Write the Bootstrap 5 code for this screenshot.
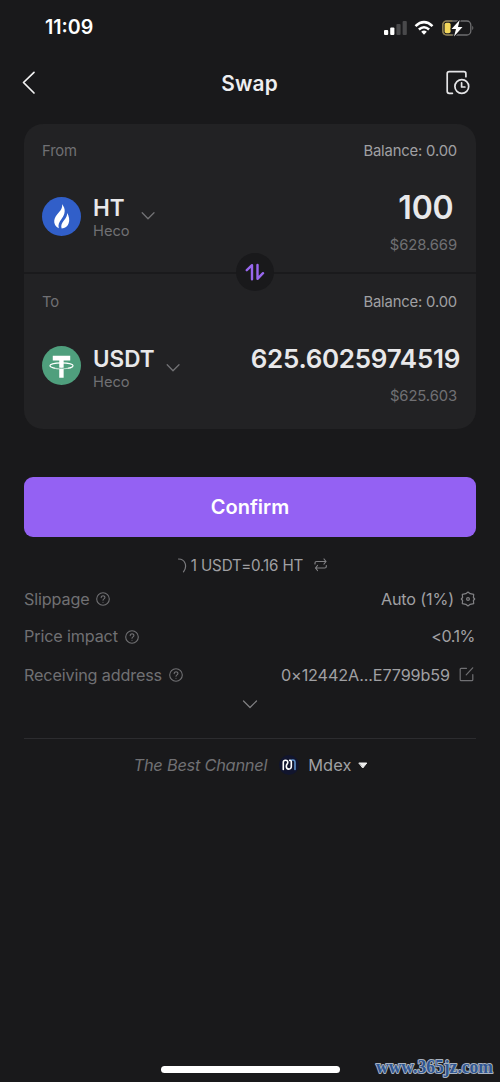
<!DOCTYPE html>
<html lang="en" data-bs-theme="dark">
<head>
<meta charset="utf-8">
<meta name="viewport" content="width=device-width, initial-scale=1">
<title>Swap</title>
<link href="https://cdn.jsdelivr.net/npm/bootstrap@5.3.0/dist/css/bootstrap.min.css" rel="stylesheet">
<style>
body{background:#19191b;color:#e8e8ea;font-family:Inter,sans-serif;line-height:1;overflow:hidden}
svg{display:block;flex:none;fill:none;stroke-linecap:round;stroke-linejoin:round}
.screen{width:500px;height:1082px}
.status{height:55px;padding:0 26px 0 45px}
.clock{font-size:19.6px;font-weight:600;color:#fff;padding-top:1px}
.wifi{margin:0 8px 0 6px}
.topbar{height:57px;padding:0 30px 0 22px}
.topbar>svg{position:relative;top:-1px}
.topbar h1{font-size:20.8px;font-weight:600;letter-spacing:.2px;padding-left:7px;padding-top:1px;color:#eeeef0}
.swap-card{margin:12px 24px 0;height:304.5px;border-radius:19px;background:#222224;overflow:hidden;border:0}
.side{padding:0 19px 0 18px}
.side-from{height:147.5px;border-bottom:2px solid #1a1a1c;box-sizing:content-box}
.caption-row{height:54px;font-size:14.8px;letter-spacing:-.16px}
.dim{color:#707073}
.soft{color:#a0a0a3}
.token-row{height:76px}
.token-names{padding-top:3px;margin-left:13px}
.side-to .token-names{padding-top:6px}
.chevron{margin-left:7px}
.symbol{font-size:22.5px;font-weight:600;line-height:26px}
.chain{font-size:14.7px;line-height:20px}
.amount{font-weight:600;line-height:40px;white-space:nowrap}
.amount-in{font-size:32px;margin-right:3.5px;padding-top:2px;letter-spacing:-.2px}
.amount-out{font-size:26px;margin-right:-3px;padding-top:3px;letter-spacing:-.29px}
.fiat{font-size:14.8px;line-height:18px;letter-spacing:-.1px;padding-top:8px}
.flip{width:38px;height:38px;background:#19191b;top:253px;left:235.5px}
.btn-confirm{margin:48.5px 24px 0;height:60px;border-radius:9px;background:#9461f3;color:#fff;font-size:20px;font-weight:600;border:0;padding:0}
.rate{height:26px;margin-top:16px;font-size:15.2px;letter-spacing:-.15px;padding-left:4px}
.rate-text{margin:0 11px 0 4px}
.detail{margin:0 24px;font-size:16.2px;letter-spacing:-.15px}
.slippage{height:40px}
.impact{height:35px}
.impact .soft{letter-spacing:-.5px;padding-right:1px}
.receiving{height:42px}
.help{margin-left:7px}
.more{height:42px;padding-top:2px}
.divider{margin:0 24px;height:1px;background:#2c2c2f}
.channel{height:52px;font-size:16.4px;letter-spacing:-.25px;padding-left:2px}
.channel-name{letter-spacing:.05px}
.home-bar{width:179px;height:7px;border-radius:4px;background:#fff;left:160.5px;bottom:9.5px}
</style>
</head>
<body>
<main class="screen position-relative d-flex flex-column">
  <div class="status d-flex align-items-center justify-content-between">
    <span class="clock">11:09</span>
    <div class="d-flex align-items-center">
      <svg width="24" height="16" viewBox="0 0 24 16"><g fill="#fff"><rect x="0" y="10" width="4.200" height="5" rx="1"/><rect x="6.200" y="7.500" width="4.200" height="7.500" rx="1"/></g><g fill="#49494b"><rect x="12.400" y="4" width="4.200" height="11" rx="1"/><rect x="18.600" y="1" width="4.200" height="14" rx="1"/></g></svg>
      <svg class="wifi" width="20" height="16" viewBox="0 0 20 16" stroke="#fff" stroke-width="2.600"><path d="M1.500 6.100Q10 -1.700 18.500 6.100M4.900 9.500Q10 5 15.100 9.500" stroke-linecap="butt"/><path d="M7.200 11.700Q10 9.500 12.800 11.700L10 14.700Z" fill="#fff" stroke="none"/></svg>
      <svg width="32" height="18" viewBox="0 0 32 18"><rect x=".8" y="2" width="28" height="14" rx="4" stroke="#6e6e70" stroke-width="1.300"/><path d="M10 2H5Q.8 2 .8 6v6q0 4 4.200 4h5" stroke="#95834a" stroke-width="1.200"/><rect x="2.600" y="3.800" width="6" height="10.400" rx="1.800" fill="#f3d75b"/><path d="M30.300 6.800q2 2.200 0 4.400z" fill="#777"/><path d="M17.700 1 9.500 10H14l-2 7.500L20.500 8H16z" fill="#fff" stroke="#19191b" stroke-width="2" paint-order="stroke"/></svg>
    </div>
  </div>
  <header class="topbar d-flex align-items-center justify-content-between">
    <svg width="26" height="24" viewBox="0 0 26 24" stroke="#f2f2f3" stroke-width="1.700"><path d="M12 1.300 1.500 11.500 12 22"/></svg>
    <h1 class="mb-0">Swap</h1>
    <svg width="26" height="26" viewBox="0 0 26 26" stroke="#e5e5e7" stroke-width="1.700"><path d="M8.400 23.300H5.200q-2 0-2-2V3.700q0-2 2-2h14.700q2 0 2 2v3"/><circle cx="17.800" cy="16.500" r="6.900"/><path d="M17.600 12.800v4.200h3.300"/></svg>
  </header>

  <section class="swap-card card position-relative">
    <div class="side side-from">
      <div class="caption-row d-flex align-items-center justify-content-between"><span class="dim">From</span><span class="soft">Balance: 0.00</span></div>
      <div class="token-row d-flex justify-content-between">
        <div class="d-flex align-items-center">
          <svg width="39" height="39" viewBox="0 0 38 38"><circle cx="19" cy="19" r="19" fill="#315fc9"/><path d="M19.400 6.800c1 4-1.400 6.400-4.300 9.700-5.200 5.900-3.500 11.700 1.300 13.900-1-3.300.2-5.700 2.800-9.200 3.300-4.500 4.400-9.300.2-14.400z" fill="#fff"/><path d="M24.600 15.600c1.700 3 2.700 7 1.300 10.200-1 2.700-3.300 4.700-6.800 5-1-3.200.3-5.700 2.400-8.200 2-2.400 3-4.200 3.100-7z" fill="#fff"/></svg>
          <div class="token-names" style="margin-left:12px"><div class="symbol">HT</div><div class="chain dim">Heco</div></div>
          <svg class="chevron" width="22" height="12" viewBox="0 0 22 12" stroke="#727275" stroke-width="1.300"><path d="M5.200 2.800 11 8.800 17 2.800"/></svg>
        </div>
        <div class="text-end pt-2"><div class="amount amount-in">100</div><div class="fiat dim">$628.669</div></div>
      </div>
    </div>
    <div class="side side-to">
      <div class="caption-row d-flex align-items-center justify-content-between pt-1"><span class="dim">To</span><span class="soft">Balance: 0.00</span></div>
      <div class="token-row d-flex justify-content-between">
        <div class="d-flex align-items-center">
          <svg width="39" height="39" viewBox="0 0 38 38"><circle cx="19" cy="19" r="19" fill="#4f9f7d"/><ellipse cx="19" cy="19.300" rx="11.300" ry="2.900" stroke="#fff" stroke-width="1.100"/><path d="M10.500 9.500h17v4.700h-6.400V31h-4.300V14.200h-6.300z" fill="#fff"/><path d="M13 21.300q6 .9 12 0" stroke="#4f9f7d" stroke-width=".8"/></svg>
          <div class="token-names" style="margin-left:12px"><div class="symbol">USDT</div><div class="chain dim">Heco</div></div>
          <svg class="chevron mt-1" width="22" height="12" viewBox="0 0 22 12" stroke="#727275" stroke-width="1.300"><path d="M5.200 2.800 11 8.800 17 2.800"/></svg>
        </div>
        <div class="text-end pt-2"><div class="amount amount-out">625.6025974519</div><div class="fiat dim">$625.603</div></div>
      </div>
    </div>
  </section>
  <div class="flip position-absolute rounded-circle d-flex align-items-center justify-content-center">
    <svg width="20" height="18" viewBox="0 0 20 18" stroke="#9867ee" stroke-width="2.400"><path d="M1.800 7.200 7 2.200v14M12.500 2v13.800L18 10.200"/></svg>
  </div>

  <button class="btn btn-confirm" type="button">Confirm</button>
  <div class="rate soft d-flex align-items-center justify-content-center">
    <svg width="10" height="16" viewBox="0 0 10 16" stroke="#7b7b7e" stroke-width="1.200"><path d="M1.500 1C8.500 1 10.500 8.500 6.500 13.800"/></svg>
    <span class="rate-text">1 USDT=0.16 HT</span>
    <svg width="13" height="16" viewBox="2 1 13 16" stroke="#818184" stroke-width="1.200"><path d="M3 7V6q0-1.500 1.500-1.500H14M12 2l2 2.500L12 7M14.300 8.500v1q0 1.500-1.500 1.500H3.500M5.500 8.500l-2 2.500 2 2.500"/></svg>
  </div>
  <div class="detail slippage d-flex align-items-center">
    <span class="dim">Slippage</span>
    <svg class="help" width="14" height="14" viewBox="0 0 14 14" stroke="#707073" stroke-width="1.100"><circle cx="7" cy="7" r="6.300"/><path d="M5.200 5.600c0-2.500 3.800-2.300 3.700 0C8.800 6.900 7 6.800 7 8.300M7 10.200v.1"/></svg>
    <span class="soft ms-auto">Auto (1%)</span>
    <svg style="margin-left:6px" width="16" height="16" viewBox="1 0 16 16" stroke="#818184" stroke-width="1.200"><path d="M9 1 11.200 2.700 14.700 3.400 14.400 6.500 15.700 8 14.400 9.500 14.700 12.600 11.200 13.300 9 15 6.800 13.300 3.300 12.600 3.600 9.500 2.300 8 3.600 6.500 3.300 3.400 6.800 2.700z"/><circle cx="9" cy="8" r="1.400"/></svg>
  </div>
  <div class="detail impact d-flex align-items-center">
    <span class="dim">Price impact</span>
    <svg class="help" width="14" height="14" viewBox="0 0 14 14" stroke="#707073" stroke-width="1.100"><circle cx="7" cy="7" r="6.300"/><path d="M5.200 5.600c0-2.500 3.800-2.300 3.700 0C8.800 6.900 7 6.800 7 8.300M7 10.200v.1"/></svg>
    <span class="soft ms-auto">&lt;0.1%</span>
  </div>
  <div class="detail receiving d-flex align-items-center">
    <span class="dim">Receiving address</span>
    <svg class="help" width="14" height="14" viewBox="0 0 14 14" stroke="#707073" stroke-width="1.100"><circle cx="7" cy="7" r="6.300"/><path d="M5.200 5.600c0-2.500 3.800-2.300 3.700 0C8.800 6.900 7 6.800 7 8.300M7 10.200v.1"/></svg>
    <span class="soft ms-auto" style="letter-spacing:-.11px">0×12442A...E7799b59</span>
    <svg style="margin-left:9px" width="17" height="18" viewBox="1 0 17 18" stroke="#707073" stroke-width="1.200"><path d="M8.500 2.300H3.200q-1 0-1 1v10.400q0 1 1 1h10.600q1 0 1-1V8.500M8.200 8.800l6.500-7"/></svg>
  </div>
  <div class="more d-flex justify-content-center"><svg width="18" height="12" viewBox="0 0 18 12" stroke="#818184" stroke-width="1.200"><path d="M2.500 3 9 9.500 15.500 3"/></svg></div>
  <div class="divider"></div>
  <div class="channel d-flex align-items-center justify-content-center">
    <span class="dim fst-italic">The Best Channel</span>
    <svg style="margin:0 8px 0 11px" width="22" height="22" viewBox="0 0 22 22"><circle cx="11" cy="11" r="10" fill="#11152e"/><g stroke-width="1.600"><path d="M13 6.300q4-1 4 2V15.500" stroke="#6193cb"/><path d="M5.300 15.500V8.200q0-2 2.200-2 2.300 0 2.300 2.200c0 1.400-1.500 2-1.500 3.800 0 3.800 5 3.800 5 .4V8q0-1.700-1.600-1.600" stroke="#fff"/></g></svg>
    <span class="soft channel-name">Mdex</span>
    <svg style="margin-left:7px" width="10" height="7" viewBox="0 0 10 7"><path d="M1.200 1h7.600L5 5.700z" fill="#eee" stroke="#eee"/></svg>
  </div>
  <div class="home-bar position-absolute"></div>
  <svg class="position-absolute end-0 bottom-0" width="130" height="30" viewBox="0 0 130 30"><text x="6" y="20.500" font-family="Liberation Serif,serif" font-size="18.500" font-weight="bold" textLength="117" lengthAdjust="spacingAndGlyphs" fill="#2e5693" stroke="#a9b2bf" stroke-width="2" paint-order="stroke">www.365jz.com</text></svg>
</main>
<script src="https://cdn.jsdelivr.net/npm/bootstrap@5.3.0/dist/js/bootstrap.bundle.min.js"></script>
</body>
</html>
